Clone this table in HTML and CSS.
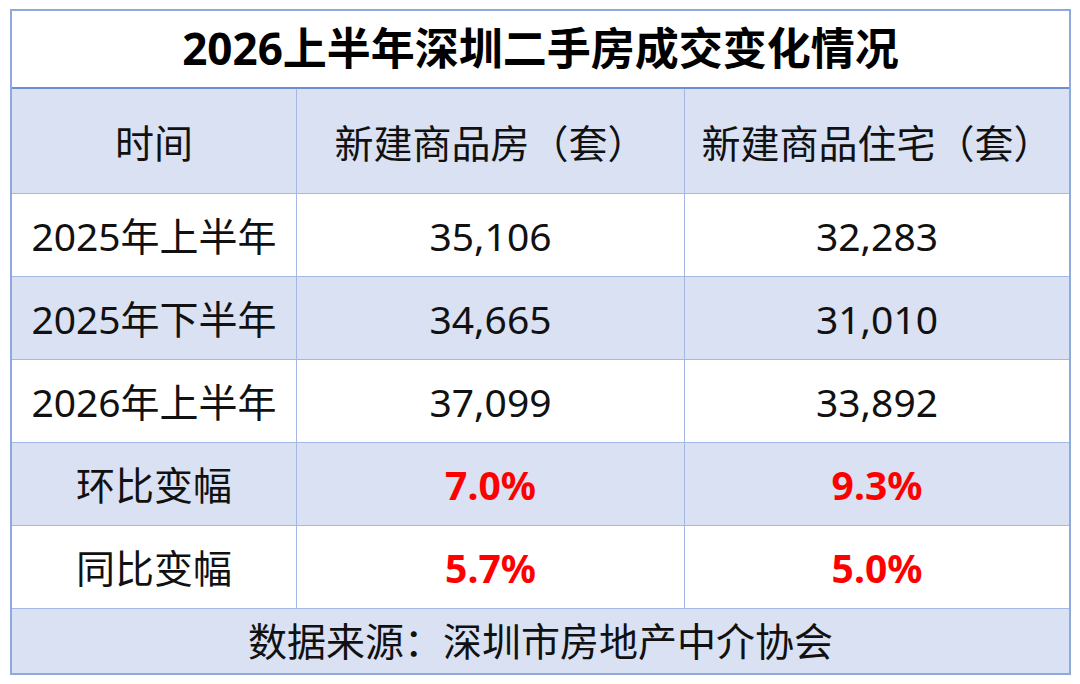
FILE: index.html
```html
<!DOCTYPE html>
<html lang="zh-CN">
<head>
<meta charset="utf-8">
<link rel="stylesheet" href="styles.css">
</head>
<body>
<div class="sheet">
  <div class="cell title">2026上半年深圳二手房成交变化情况</div>
  <div class="cell head c1">时间</div>
  <div class="cell head c2">新建商品房（套）</div>
  <div class="cell head c3">新建商品住宅（套）</div>

  <div class="cell c1">2025年上半年</div>
  <div class="cell c2">35,106</div>
  <div class="cell c3">32,283</div>

  <div class="cell alt c1">2025年下半年</div>
  <div class="cell alt c2">34,665</div>
  <div class="cell alt c3">31,010</div>

  <div class="cell c1">2026年上半年</div>
  <div class="cell c2">37,099</div>
  <div class="cell c3">33,892</div>

  <div class="cell alt c1">环比变幅</div>
  <div class="cell alt c2 red">7.0%</div>
  <div class="cell alt c3 red">9.3%</div>

  <div class="cell c1">同比变幅</div>
  <div class="cell c2 red">5.7%</div>
  <div class="cell c3 red">5.0%</div>

  <div class="cell foot">数据来源：深圳市房地产中介协会</div>
</div>
</body>
</html>
```

FILE: styles.css
```css
html, body {
  margin: 0;
  padding: 0;
  background: #ffffff;
}

body {
  padding: 9px 0 0 10px;
  font-family: "Noto Sans", "Noto Sans CJK SC", sans-serif;
  color: #111111;
}

.sheet {
  width: 1061px;
  box-sizing: border-box;
  border: 2px solid #8eaadc;
  display: grid;
  grid-template-columns: 285px 388px 1fr;
  grid-template-rows: 78px 105px 83px 83px 83px 83px 83px 64px;
}

.cell {
  box-sizing: border-box;
  display: flex;
  align-items: center;
  justify-content: center;
  font-size: 39px;
  line-height: 1;
  border-bottom: 1px solid #a3b8e3;
  background: #ffffff;
  white-space: nowrap;
}

.c1, .c2 {
  border-right: 1px solid #a3b8e3;
}

.title {
  grid-column: 1 / 4;
  font-size: 44px;
  font-weight: 700;
  color: #000000;
  border-bottom: 2px solid #6d8ed2;
  padding-bottom: 2px;
}

.head, .alt, .foot {
  background: #d9e1f2;
}

.head {
  padding-top: 2px;
}

.red {
  color: #ff0000;
  font-weight: 700;
}

.foot {
  grid-column: 1 / 4;
  border-bottom: none;
  padding-bottom: 2px;
}
```
